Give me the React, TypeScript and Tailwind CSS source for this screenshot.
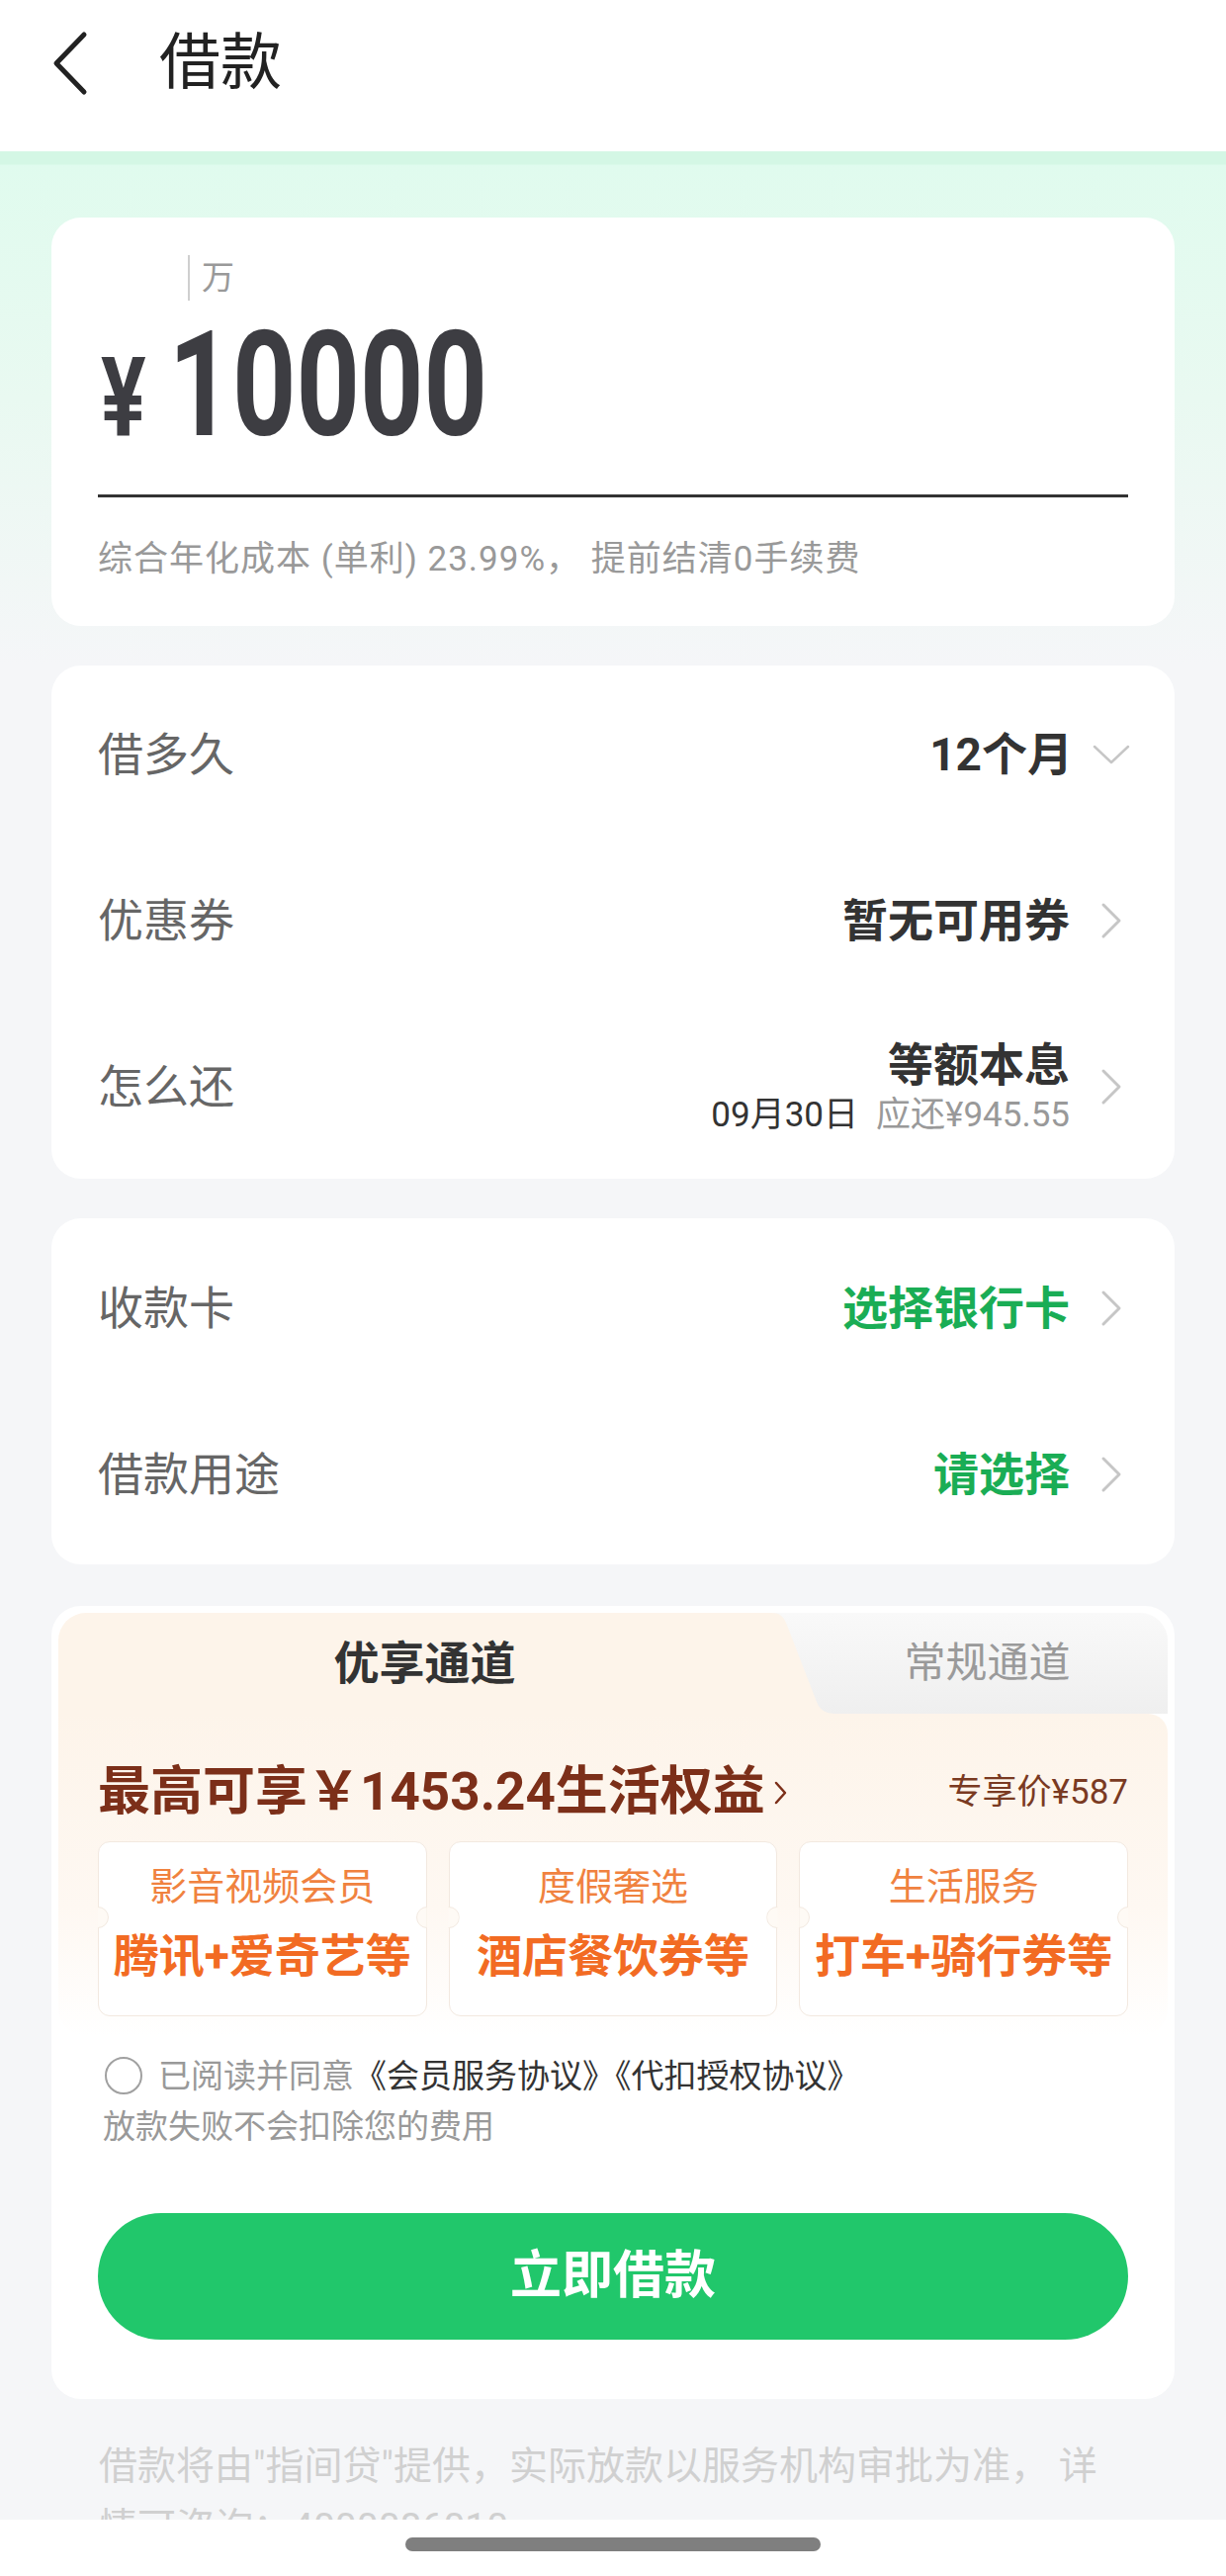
import React from "react";

const ChevronRight: React.FC = () => (
  <div className="flex w-[38px] justify-center">
    <svg width="24" height="38" viewBox="0 0 24 38" fill="none">
      <path d="M4 3 L20 19 L4 35" stroke="#c6c6c6" strokeWidth="3" strokeLinecap="round" strokeLinejoin="round" />
    </svg>
  </div>
);

const ChevronDown: React.FC = () => (
  <div className="flex w-[38px] justify-center">
    <svg width="38" height="20" viewBox="0 0 38 20" fill="none">
      <path d="M2 2 L19 18 L36 2" stroke="#c6c6c6" strokeWidth="2.5" strokeLinecap="round" strokeLinejoin="round" />
    </svg>
  </div>
);

interface RowProps {
  label: string;
  children: React.ReactNode;
  down?: boolean;
}

const Row: React.FC<RowProps> = ({ label, children, down }) => (
  <div className="flex h-[168px] items-center justify-between">
    <span className="text-[46px] leading-none text-[#666]">{label}</span>
    <div className="flex items-center">
      <div className={down ? "mr-[20px]" : "mr-[23px]"}>{children}</div>
      {down ? <ChevronDown /> : <ChevronRight />}
    </div>
  </div>
);

const perks = [
  { title: "影音视频会员", desc: "腾讯+爱奇艺等" },
  { title: "度假奢选", desc: "酒店餐饮券等" },
  { title: "生活服务", desc: "打车+骑行券等" },
];

const PerkCard: React.FC<{ title: string; desc: string }> = ({ title, desc }) => (
  <div className="relative h-[177px] rounded-[12px] border-[1.5px] border-[#f2e9e0] bg-white pt-[26px] text-center">
    <div className="text-[38px] leading-none text-[#f0823f]">{title}</div>
    <div className="mt-[28px] text-[46px] font-bold leading-none text-[#f26b23]">{desc}</div>
    <div className="absolute left-[-12px] top-[65px] h-[22px] w-[22px] rounded-full border-[1.5px] border-[#f2e9e0] bg-[#fefaf5] [clip-path:inset(0_0_0_50%)]" />
    <div className="absolute right-[-12px] top-[65px] h-[22px] w-[22px] rounded-full border-[1.5px] border-[#f2e9e0] bg-[#fefaf5] [clip-path:inset(0_50%_0_0)]" />
  </div>
);

export default function App() {
  return (
    <div className="relative h-[2605px] w-full overflow-hidden bg-[#f5f6f8] font-[Roboto,'Noto_Sans_CJK_SC',sans-serif]">
      {/* header */}
      <header className="h-[153px] bg-white">
        <div className="flex h-[128px] items-center">
          <svg className="ml-[52px]" width="40" height="66" viewBox="0 0 40 66" fill="none">
            <path d="M33 4 L5 33 L33 62" stroke="#222" strokeWidth="5" strokeLinecap="round" strokeLinejoin="round" />
          </svg>
          <h1 className="ml-[69px] text-[62px] font-normal leading-none text-[#222]">借款</h1>
        </div>
      </header>

      <main className="bg-[linear-gradient(180deg,#d4f7e5_0px,#d4f7e5_13px,#e0fbee_14px,#e9f9f1_250px,#f5f6f8_520px,#f5f6f8_100%)] pt-[67px]">
        {/* amount */}
        <section className="mx-[52px] rounded-[30px] bg-white px-[47px] pb-[50px] pt-[38px]">
          <div className="flex h-[46px] items-start pl-[91px]">
            <div className="h-[46px] w-[2px] bg-[#cfcfcf]" />
            <span className="ml-[12px] mt-[6px] text-[33px] leading-none text-[#999]">万</span>
          </div>
          <div className="mt-[12px] flex origin-left scale-x-[0.76] items-baseline font-bold text-[#3d3d42]">
            <span className="ml-[4px] text-[112px] leading-none">¥</span>
            <span className="ml-[30px] text-[148px] leading-none">10000</span>
          </div>
          <div className="mt-[36px] h-[3px] bg-[#333]" />
          <p className="mt-[45px] text-[35px] leading-none tracking-[1px] text-[#999]">
            综合年化成本 (单利) 23.99%，&nbsp;提前结清0手续费
          </p>
        </section>

        {/* terms */}
        <section className="mx-[52px] mt-[40px] rounded-[30px] bg-white pb-[9px] pl-[47px] pr-[45px] pt-[6px]">
          <Row label="借多久" down>
            <span className="text-[46px] font-bold leading-none text-[#333]">12个月</span>
          </Row>
          <Row label="优惠券">
            <span className="text-[46px] font-bold leading-none text-[#333]">暂无可用券</span>
          </Row>
          <Row label="怎么还">
            <div className="flex flex-col items-end">
              <span className="text-[46px] font-bold leading-none text-[#333]">等额本息</span>
              <span className="mt-[10px] text-[35px] leading-none">
                <span className="text-[#333]">09月30日</span>
                <span className="ml-[18px] text-[#999]">应还¥945.55</span>
              </span>
            </div>
          </Row>
        </section>

        {/* card & purpose */}
        <section className="mx-[52px] mt-[40px] rounded-[30px] bg-white pb-[7px] pl-[47px] pr-[45px] pt-[7px]">
          <Row label="收款卡">
            <span className="text-[46px] font-bold leading-none text-[#1aad55]">选择银行卡</span>
          </Row>
          <Row label="借款用途">
            <span className="text-[46px] font-bold leading-none text-[#1aad55]">请选择</span>
          </Row>
        </section>

        {/* channel */}
        <section className="mx-[52px] mt-[42px] rounded-[30px] bg-white p-[7px] pb-[60px]">
          <div className="flex h-[102px]">
            <div className="flex flex-1 items-center justify-center rounded-tl-[28px] bg-[#fdf4ea] pl-[26px]">
              <span className="text-[46px] font-bold leading-none text-[#333]">优享通道</span>
            </div>
            <div className="w-[80px] bg-[linear-gradient(180deg,#f9f9f9,#efefef)]">
              <svg width="80" height="102" viewBox="0 0 80 102">
                <path d="M0 0 H6 C14 0 18 3 21 10 L52 90 C55 98 61 102 71 102 H80 H0 Z" fill="#fdf4ea" />
              </svg>
            </div>
            <div className="flex w-[327px] items-center justify-center rounded-tr-[28px] bg-[linear-gradient(180deg,#f9f9f9,#efefef)] pr-[38px]">
              <span className="text-[42px] leading-none text-[#9a9a9a]">常规通道</span>
            </div>
          </div>
          <div className="rounded-b-[28px] rounded-tr-[20px] bg-[linear-gradient(180deg,#fdf4ea,#fef8f2_60%,#ffffff)] px-[40px] pb-[20px] pt-[53px]">
            <div className="flex items-center justify-between">
              <div className="flex items-center text-[53px] font-bold leading-none text-[#7c2f19]">
                <span>最高可享￥1453.24生活权益</span>
                <svg className="ml-[8px]" width="16" height="28" viewBox="0 0 16 28" fill="none">
                  <path d="M3 4 L12 14 L3 24" stroke="#7c2f19" strokeWidth="2.5" strokeLinecap="round" strokeLinejoin="round" />
                </svg>
              </div>
              <span className="text-[35px] leading-none text-[#7a3a22]">专享价¥587</span>
            </div>
            <div className="mt-[23px] grid grid-cols-3 gap-[22px]">
              {perks.map((p) => (
                <PerkCard key={p.title} title={p.title} desc={p.desc} />
              ))}
            </div>
          </div>

          <div className="px-[40px]">
            <div className="mt-[21px] flex h-[38px] items-center">
              <div className="ml-[7px] h-[38px] w-[38px] rounded-full border-[2.5px] border-[#a0a0a0]" />
              <span className="ml-[16px] text-[33px] leading-none text-[#999]">
                已阅读并同意<span className="text-[#333]">《会员服务协议》《代扣授权协议》</span>
              </span>
            </div>
            <p className="ml-[5px] mt-[16px] text-[33px] leading-none text-[#999]">放款失败不会扣除您的费用</p>
            <button className="mt-[71px] flex h-[128px] w-full items-center justify-center rounded-full bg-[#21c76b]">
              <span className="text-[52px] font-bold leading-none text-white">立即借款</span>
            </button>
          </div>
        </section>

        <p className="mt-[37px] w-[1140px] pl-[100px] text-[39px] leading-[62px] text-[#d0d0d0]">
          借款将由"指间贷"提供，实际放款以服务机构审批为准， 详情可咨询：4000086010
        </p>
      </main>

      {/* home indicator */}
      <div className="absolute bottom-0 left-0 flex h-[57px] w-full justify-center bg-white pt-[18px]">
        <div className="h-[14px] w-[420px] rounded-full bg-[#7f7f7f]" />
      </div>
    </div>
  );
}
